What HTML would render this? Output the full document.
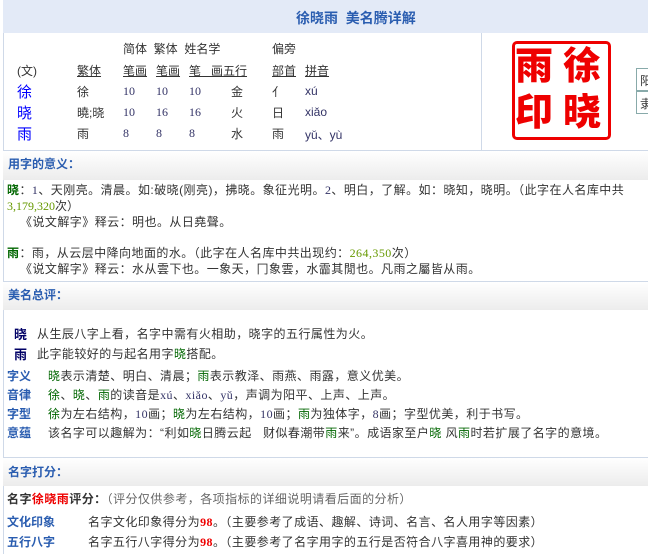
<!DOCTYPE html>
<html><head><meta charset="utf-8"><style>
*{margin:0;padding:0}
body{width:648px;height:554px;overflow:hidden;background:#fff;font-family:"Liberation Sans","Noto Sans CJK SC",sans-serif;font-size:12px;color:#333;position:relative}
.a{position:absolute;white-space:nowrap}
.t{letter-spacing:0.45px}
.hd{position:absolute;left:3px;width:645px;background:linear-gradient(#fff,#ececec);color:#2a5db0;font-weight:bold;font-size:12px;border-top:1px solid #cfd9e8}
.bl{color:#00f}.g{color:#060}.gn{color:#690;font-family:"Liberation Serif",serif}
.n{font-family:"Liberation Serif",serif;color:#336}
.u{text-decoration:underline}
.h{color:#2a5db0;font-weight:bold}
.r{color:#e00;font-weight:bold}
.s{position:absolute;font-size:38px;font-weight:900;color:#e00;line-height:42px}
</style></head><body>
<div class="a" style="left:3px;top:0;width:645px;height:33px;background:#e3eaf7"></div>
<div class="a" style="left:296px;top:8px;font-size:14px;font-weight:bold;color:#2a5db0">徐晓雨&nbsp;&nbsp;美名腾详解</div>
<div class="a" style="left:3px;top:33px;width:1px;height:521px;background:#cfd9e8"></div>
<div class="a" style="left:481px;top:33px;width:1px;height:117px;background:#cfd9e8"></div>
<div class="a" style="left:123px;top:40px">简体&nbsp;&nbsp;繁体&nbsp;&nbsp;姓名学</div>
<div class="a" style="left:272px;top:40px">偏旁</div>
<div class="a" style="left:17px;top:62px">(文)</div>
<div class="a u" style="left:77px;top:62px">繁体</div>
<div class="a u" style="left:123px;top:62px">笔画</div>
<div class="a u" style="left:156px;top:62px">笔画</div>
<div class="a u" style="left:189px;top:62px">笔&nbsp;&nbsp;&nbsp;画五行</div>
<div class="a u" style="left:272px;top:62px">部首</div>
<div class="a u" style="left:305px;top:62px">拼音</div>
<div class="a bl" style="left:17px;top:81px;font-size:15px">徐</div>
<div class="a bl" style="left:17px;top:102px;font-size:15px">晓</div>
<div class="a bl" style="left:17px;top:123px;font-size:15px">雨</div>
<div class="a" style="left:77px;top:83px">徐</div><div class="a" style="left:77px;top:104px">曉;晓</div><div class="a" style="left:77px;top:125px">雨</div>
<div class="a n" style="left:123px;top:84px">10</div><div class="a n" style="left:156px;top:84px">10</div><div class="a n" style="left:189px;top:84px">10</div>
<div class="a n" style="left:123px;top:105px">10</div><div class="a n" style="left:156px;top:105px">16</div><div class="a n" style="left:189px;top:105px">16</div>
<div class="a n" style="left:123px;top:126px">8</div><div class="a n" style="left:156px;top:126px">8</div><div class="a n" style="left:189px;top:126px">8</div>
<div class="a" style="left:231px;top:83px">金</div><div class="a" style="left:231px;top:104px">火</div><div class="a" style="left:231px;top:125px">水</div>
<div class="a" style="left:272px;top:83px">亻</div><div class="a" style="left:272px;top:104px">日</div><div class="a" style="left:272px;top:125px">雨</div>
<div class="a" style="left:305px;top:84px;color:#336">xú</div><div class="a" style="left:305px;top:105px;color:#336">xiǎo</div><div class="a" style="left:305px;top:126px;color:#336">yǔ、yù</div>
<div class="a" style="left:512px;top:41px;width:93px;height:93px;border:3px solid #e00;border-radius:5px"></div>
<div class="s" style="left:515px;top:46px">雨</div>
<div class="s" style="left:563px;top:46px">徐</div>
<div class="s" style="left:515px;top:92px">印</div>
<div class="s" style="left:563px;top:92px">晓</div>
<div class="a" style="left:636px;top:68px;width:14px;height:21px;border:1px solid #8aa"></div>
<div class="a" style="left:640px;top:72px">阳</div>
<div class="a" style="left:636px;top:91px;width:14px;height:21px;border:1px solid #8aa"></div>
<div class="a" style="left:640px;top:95px">隶</div>

<div class="hd" style="top:150px;height:25px;padding:4px 0 0 5px">用字的意义：</div>
<div class="a t" style="left:7px;top:181px"><b class="g">晓</b>：<span class="n">1</span>、天刚亮。清晨。如:破晓(刚亮)，拂晓。象征光明。<span class="n">2</span>、明白，了解。如：晓知，晓明。（此字在人名库中共</div>
<div class="a" style="left:7px;top:197px"><span class="gn">3,179,320</span>次）</div>
<div class="a t" style="left:20px;top:213px">《说文解字》释云：明也。从日堯聲。</div>
<div class="a t" style="left:7px;top:244px"><b class="g">雨</b>：雨，从云层中降向地面的水。（此字在人名库中共出现约：<span class="gn">264,350</span>次）</div>
<div class="a t" style="left:20px;top:260px">《说文解字》释云：水从雲下也。一象天，冂象雲，水霝其閒也。凡雨之屬皆从雨。</div>
<div class="hd" style="top:281px;height:24px;padding:4px 0 0 5px">美名总评：</div>
<div class="a" style="left:14px;top:324px;font-weight:bold;color:#006;font-size:13px">晓</div>
<div class="a t" style="left:37px;top:325px">从生辰八字上看，名字中需有火相助，晓字的五行属性为火。</div>
<div class="a" style="left:14px;top:344px;font-weight:bold;color:#006;font-size:13px">雨</div>
<div class="a t" style="left:37px;top:345px">此字能较好的与起名用字<span class="g">晓</span>搭配。</div>
<div class="a h" style="left:7px;top:367px">字义</div><div class="a t" style="left:48px;top:367px"><span class="g">晓</span>表示清楚、明白、清晨；<span class="g">雨</span>表示教泽、雨燕、雨露，意义优美。</div>
<div class="a h" style="left:7px;top:386px">音律</div><div class="a t" style="left:48px;top:386px"><span class="g">徐</span>、<span class="g">晓</span>、<span class="g">雨</span>的读音是<span class="n">xú</span>、<span class="n">xiǎo</span>、<span class="n">yǔ</span>，声调为阳平、上声、上声。</div>
<div class="a h" style="left:7px;top:405px">字型</div><div class="a t" style="left:48px;top:405px"><span class="g">徐</span>为左右结构，<span class="n">10</span>画；<span class="g">晓</span>为左右结构，<span class="n">10</span>画；<span class="g">雨</span>为独体字，<span class="n">8</span>画；字型优美，利于书写。</div>
<div class="a h" style="left:7px;top:424px">意蕴</div><div class="a t" style="left:48px;top:424px">该名字可以趣解为：“利如<span class="g">晓</span>日腾云起&nbsp;&nbsp;&nbsp;财似春潮带<span class="g">雨</span>来”。成语家至户<span class="g">晓</span>&nbsp;风<span class="g">雨</span>时若扩展了名字的意境。</div>
<div class="hd" style="top:457px;height:23px;padding:5px 0 0 5px">名字打分：</div>
<div class="a t" style="left:7px;top:490px"><b style="color:#333">名字</b><span class="r">徐晓雨</span><b style="color:#333">评分：</b><span style="color:#666">（评分仅供参考，各项指标的详细说明请看后面的分析）</span></div>
<div class="a h" style="left:7px;top:513px">文化印象</div><div class="a t" style="left:88px;top:513px">名字文化印象得分为<span class="r" style="font-family:'Liberation Serif',serif">98</span>。（主要参考了成语、趣解、诗词、名言、名人用字等因素）</div>
<div class="a h" style="left:7px;top:533px">五行八字</div><div class="a t" style="left:88px;top:533px">名字五行八字得分为<span class="r" style="font-family:'Liberation Serif',serif">98</span>。（主要参考了名字用字的五行是否符合八字喜用神的要求）</div>
</body></html>
